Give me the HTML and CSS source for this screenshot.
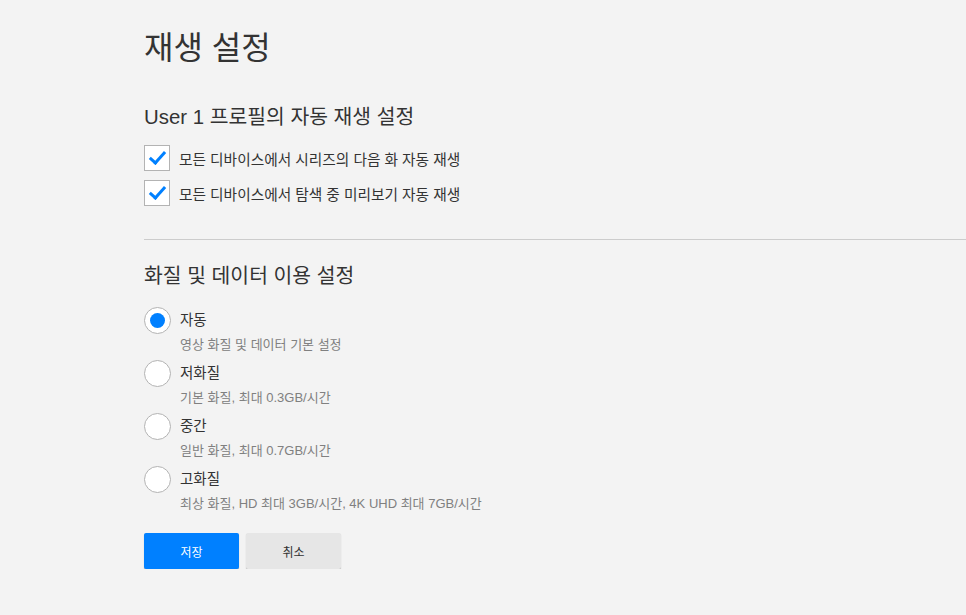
FILE: index.html
```html
<!DOCTYPE html>
<html lang="ko">
<head>
    <meta charset="UTF-8">
    <meta name="viewport" content="width=device-width, initial-scale=1.0">
    <title>재생 설정</title>
    <link rel="stylesheet" href="styles.css">
</head>
<body>
    <div class="page">
        <h1>재생 설정</h1>

        <section class="section autoplay">
            <h2>User 1 프로필의 자동 재생 설정</h2>
            <label class="check-row">
                <input type="checkbox" checked>
                <span class="box"></span>
                <span class="text">모든 디바이스에서 시리즈의 다음 화 자동 재생</span>
            </label>
            <label class="check-row">
                <input type="checkbox" checked>
                <span class="box"></span>
                <span class="text">모든 디바이스에서 탐색 중 미리보기 자동 재생</span>
            </label>
        </section>

        <hr class="divider">

        <section class="section quality">
            <h2>화질 및 데이터 이용 설정</h2>
            <label class="radio-row">
                <input type="radio" name="quality" checked>
                <span class="dot"></span>
                <span class="radio-text">
                    <span class="name">자동</span>
                    <span class="desc">영상 화질 및 데이터 기본 설정</span>
                </span>
            </label>
            <label class="radio-row">
                <input type="radio" name="quality">
                <span class="dot"></span>
                <span class="radio-text">
                    <span class="name">저화질</span>
                    <span class="desc">기본 화질, 최대 0.3GB/시간</span>
                </span>
            </label>
            <label class="radio-row">
                <input type="radio" name="quality">
                <span class="dot"></span>
                <span class="radio-text">
                    <span class="name">중간</span>
                    <span class="desc">일반 화질, 최대 0.7GB/시간</span>
                </span>
            </label>
            <label class="radio-row">
                <input type="radio" name="quality">
                <span class="dot"></span>
                <span class="radio-text">
                    <span class="name">고화질</span>
                    <span class="desc">최상 화질, HD 최대 3GB/시간, 4K UHD 최대 7GB/시간</span>
                </span>
            </label>
        </section>

        <div class="actions">
            <button class="btn btn-save">저장</button>
            <button class="btn btn-cancel">취소</button>
        </div>
    </div>
</body>
</html>
```

FILE: styles.css
```css
/* Base */
body {
    margin: 0;
    background-color: #f3f3f3;
    color: #333;
    font-family: "Liberation Sans", "Noto Sans CJK KR", Arial, sans-serif;
}

.page {
    padding: 24px 0 0 144px;
}

h1 {
    margin: 0;
    font-size: 32px;
    font-weight: normal;
    line-height: 48px;
    color: #333;
}

h2 {
    margin: 0 0 14px;
    font-size: 20.4px;
    font-weight: normal;
    line-height: 28px;
    color: #333;
}

.autoplay {
    margin-top: 31px;
}

.quality {
    margin-top: 22px;
}

.quality h2 {
    margin-bottom: 17px;
}

/* Checkboxes */
.check-row {
    display: flex;
    align-items: center;
    height: 26px;
    margin-bottom: 9px;
    cursor: pointer;
}

.check-row input,
.radio-row input {
    display: none;
}

.box {
    width: 24px;
    height: 24px;
    border: 1px solid #b3b3b3;
    background: #fff;
    position: relative;
    flex-shrink: 0;
}

.check-row input:checked + .box::after {
    content: "";
    position: absolute;
    left: 8px;
    top: 2px;
    width: 6px;
    height: 13px;
    border: solid #0080ff;
    border-width: 0 3.5px 3.5px 0;
    transform: rotate(42deg);
}

.text {
    margin-left: 9px;
    font-size: 14.7px;
    color: #333;
}

.divider {
    border: none;
    border-top: 1px solid #ccc;
    margin: 33px 0 0;
}

/* Radios */
.radio-row {
    display: flex;
    align-items: flex-start;
    height: 53px;
    cursor: pointer;
}

.dot {
    width: 25px;
    height: 25px;
    border: 1px solid #b3b3b3;
    border-radius: 50%;
    background: #fff;
    position: relative;
    flex-shrink: 0;
}

.radio-row input:checked + .dot::after {
    content: "";
    position: absolute;
    left: 5px;
    top: 5px;
    width: 15px;
    height: 15px;
    border-radius: 50%;
    background: #0080ff;
}

.radio-text {
    margin-left: 9px;
    display: flex;
    flex-direction: column;
}

.name {
    font-size: 14.5px;
    line-height: 26px;
    color: #333;
}

.desc {
    margin-top: 2px;
    font-size: 13px;
    line-height: 20px;
    color: #808080;
}

/* Buttons */
.actions {
    display: flex;
    gap: 7px;
    margin-top: 14px;
}

.btn {
    width: 95px;
    height: 36px;
    border: none;
    border-radius: 2px;
    font-size: 12px;
    font-family: inherit;
    cursor: pointer;
    box-shadow: 0 1px 1px rgba(0,0,0,0.25);
}

.btn-save {
    background-color: #0080ff;
    color: #fff;
}

.btn-cancel {
    background-color: #e6e6e6;
    color: #333;
}
```
